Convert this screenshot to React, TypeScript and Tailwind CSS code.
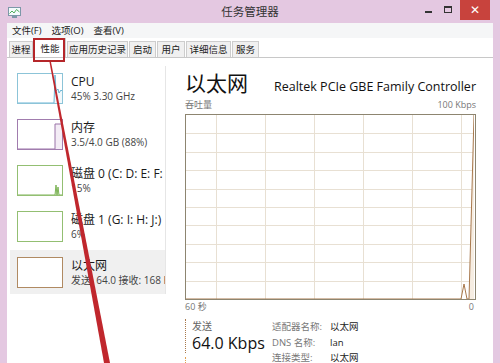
import React from 'react';

type Item = {
  title: string;
  sub: string;
  border: string;
  graph: 'cpu' | 'mem' | 'disk0' | 'none';
};

const ITEMS: Item[] = [
  { title: 'CPU', sub: '45% 3.30 GHz', border: 'border-[#8cc4d8]', graph: 'cpu' },
  { title: '内存', sub: '3.5/4.0 GB (88%)', border: 'border-[#a17cae]', graph: 'mem' },
  { title: '磁盘 0 (C: D: E: F:', sub: '15%', border: 'border-[#93bf72]', graph: 'disk0' },
  { title: '磁盘 1 (G: I: H: J:)', sub: '6%', border: 'border-[#93bf72]', graph: 'none' },
  { title: '以太网', sub: '发送\u00a0\u00a064.0 接收: 168 K', border: 'border-[#b08a62]', graph: 'none' },
];

const TABS = [
  { label: '进程', w: 'w-[24px]' },
  { label: '性能', w: 'w-[32px]', active: true },
  { label: '应用历史记录', w: 'w-[61px]' },
  { label: '启动', w: 'w-[27px]' },
  { label: '用户', w: 'w-[28px]' },
  { label: '详细信息', w: 'w-[45px]' },
  { label: '服务', w: 'w-[27px]' },
];

const MiniGraph = ({ kind }: { kind: Item['graph'] }) => {
  // 缩略图里的小折线（填充和描边分开，免得闭合成斜线）
  if (kind === 'cpu')
    return (
      <>
        <polygon points="0,29 36,29 37,1 38,17 40,15 41,19 43,16 44,17 44,29" fill="#f1f8fb" />
        <polyline points="0,29 36,29 37,1 38,17 40,15 41,19 43,16 44,17" fill="none" stroke="#6ab5d4" strokeWidth="1" />
      </>
    );
  if (kind === 'mem')
    return (
      <>
        <polygon points="37,29 37,4 44,4 44,29" fill="#f3ecf5" />
        <polyline points="0,29 37,29 37,4 44,4" fill="none" stroke="#9a72a8" strokeWidth="1" />
      </>
    );
  if (kind === 'disk0')
    return (
      <>
        <polygon points="37,29 38,19 39,29 40,21 41,29" fill="#dcecd0" />
        <polyline points="0,29 37,29 38,19 39,29 40,21 41,29 44,29" fill="none" stroke="#7cb356" strokeWidth="1" />
      </>
    );
  return null;
};

const Row = ({ item, selected }: { item: Item; selected?: boolean }) => (
  <div
    className={`h-[44px] ml-[3px] pl-[7px] flex items-center gap-[8px] overflow-hidden ${
      selected ? 'bg-[#f0f0f0]' : ''
    }`}
  >
    <div className={`w-[46px] h-[31px] border ${item.border} bg-white shrink-0`}>
      <svg width="44" height="29" viewBox="0 0 44 29">
        <MiniGraph kind={item.graph} />
      </svg>
    </div>
    <div className="flex flex-col whitespace-nowrap text-[#1a1a1a]">
      <span className="text-[12px] leading-[15px]">{item.title}</span>
      <span className="text-[10px] leading-[14px] text-[#444]">{item.sub}</span>
    </div>
  </div>
);

const ThroughputGraph = () => {
  const vLines = [30, 79, 128, 177, 226, 275];
  const hLines = [1, 2, 3, 4, 5, 6, 7, 8, 9].map(k => Math.round(k * 18.4));
  return (
    <div className="h-[186px] border border-[#8d8570] bg-white">
      <svg width="288" height="184" viewBox="0 0 288 184">
        {vLines.map(x => (
          <line key={'v' + x} x1={x + 0.5} y1="0" x2={x + 0.5} y2="184" stroke="#e8e0d3" strokeWidth="1" />
        ))}
        {hLines.map(y => (
          <line key={'h' + y} x1="0" y1={y + 0.5} x2="288" y2={y + 0.5} stroke="#e8e0d3" strokeWidth="1" />
        ))}
        <polygon points="283,184 288,0 288,184" fill="#f6ede2" />
        <polyline
          points="0,184 275,184 278,169 281,184 283,184 288,0"
          fill="none"
          stroke="#a8794d"
          strokeWidth="1"
        />
      </svg>
    </div>
  );
};

export default function App() {
  return (
    <div className="w-[500px] h-[363px] bg-[#e4c8e1] overflow-hidden relative flex flex-col font-['Open_Sans','Noto_Sans_CJK_SC',sans-serif] text-[#222]">
      {/* Title bar */}
      <div className="h-[23px] grid grid-cols-[1fr_auto_1fr] shrink-0">
        <div className="pl-[8px] pt-[7px]">
          <svg width="13" height="11" viewBox="0 0 13 11">
            <rect x="0.5" y="0.5" width="12" height="8" fill="#f4fafc" stroke="#7d98a8" />
            <polyline points="1.5,6.5 4,4 6,6 8.5,2.5 11.5,5" fill="none" stroke="#4fae5c" strokeWidth="1" />
            <rect x="4" y="9" width="5" height="2" fill="#7d98a8" />
          </svg>
        </div>
        <div className="text-[11.5px] leading-[24px] text-[#333]">任务管理器</div>
        <div className="flex justify-end items-start pr-[10px]">
          <div className="w-[20px] h-[20px] flex items-center justify-center">
            <div className="w-[7px] h-[2px] bg-[#333] mt-[3px]" />
          </div>
          <div className="w-[20px] h-[20px] flex items-center justify-center">
            <div className="w-[8px] h-[7px] border border-t-2 border-[#333] mb-[2px]" />
          </div>
          <div className="w-[30px] h-[20px] bg-[#c8433d] ml-[2px] flex items-center justify-center text-white text-[12px] leading-none font-['DejaVu_Sans',sans-serif]">
            ✕
          </div>
        </div>
      </div>

      {/* Window body */}
      <div className="flex-1 mx-[7px] bg-white flex flex-col min-h-0">
        {/* Menu */}
        <div className="h-[15px] bg-[#f5f6f7] flex items-center pl-[5px] gap-[10px] text-[9.5px] leading-none text-[#222]">
          <span>文件(F)</span>
          <span>选项(O)</span>
          <span>查看(V)</span>
        </div>

        {/* Tabs */}
        <div className="h-[20px] flex items-end pl-[2px] gap-[1px] border-b border-[#c8c8c8]">
          {TABS.map(t => (
            <div
              key={t.label}
              className={`${t.w} text-center text-[9.5px] border border-b-0 border-[#cdcdcd] ${
                t.active ? 'h-[19px] leading-[19px] bg-white' : 'h-[16px] leading-[16px] bg-[#f0f0f0]'
              }`}
            >
              {t.label}
            </div>
          ))}
        </div>

        {/* Content */}
        <div className="flex-1 flex min-h-0">
          {/* Left list */}
          <div className="w-[159px] shrink-0 pt-[8px]">
            <div className="flex flex-col gap-[2px] border-r border-[#e6e6e6]">
              {ITEMS.map((it, i) => (
                <Row key={it.title} item={it} selected={i === 4} />
              ))}
            </div>
          </div>

          {/* Right detail */}
          <div className="flex-1 pl-[19px] pr-[17px] pt-[11px] flex flex-col min-w-0">
            <div className="h-[29px] flex items-baseline justify-between whitespace-nowrap">
              <span className="text-[21px] leading-[29px] text-[#111]">以太网</span>
              <span className="text-[12.5px] text-[#111]">Realtek PCIe GBE Family Controller</span>
            </div>
            <div className="h-[14px] mb-[2px] flex justify-between items-center text-[9px] text-[#777]">
              <span>吞吐量</span>
              <span>100 Kbps</span>
            </div>
            <ThroughputGraph />
            <div className="h-[14px] flex justify-between items-center text-[9px] text-[#777]">
              <span>60 秒</span>
              <span className="pr-[2px]">0</span>
            </div>

            {/* Stats */}
            <div className="mt-[6px] flex">
              <div className="w-[87px] shrink-0 flex flex-col gap-[4px]">
                <div className="border-l border-dotted border-[#a8794d] pl-[6px]">
                  <div className="text-[10px] leading-[14px] text-[#666]">发送</div>
                  <div className="text-[16px] leading-[20px] text-[#111] whitespace-nowrap">64.0 Kbps</div>
                </div>
                <div className="h-[10px] border-l border-dotted border-[#e0a050]" />
              </div>
              <div className="pt-[1px] grid grid-cols-[58px_auto] text-[9.5px] leading-[14px] whitespace-nowrap">
                <span className="text-[#777]">适配器名称:</span>
                <span className="text-[#222]">以太网</span>
                <span className="text-[#777]">DNS 名称:</span>
                <span className="text-[#222]">lan</span>
                <span className="text-[#777]">连接类型:</span>
                <span className="text-[#222]">以太网</span>
              </div>
            </div>
          </div>
        </div>
      </div>

      {/* Annotation: red box around 性能 tab and arrow */}
      <div className="absolute left-[33px] top-[38px] w-[32px] h-[24px] border-2 border-[#b5262a] pointer-events-none" />
      <svg className="absolute left-0 top-0 pointer-events-none" width="500" height="363" viewBox="0 0 500 363">
        <polygon points="49.5,62 51,62 110,363 104,363" fill="#c0272d" />
      </svg>
    </div>
  );
}
